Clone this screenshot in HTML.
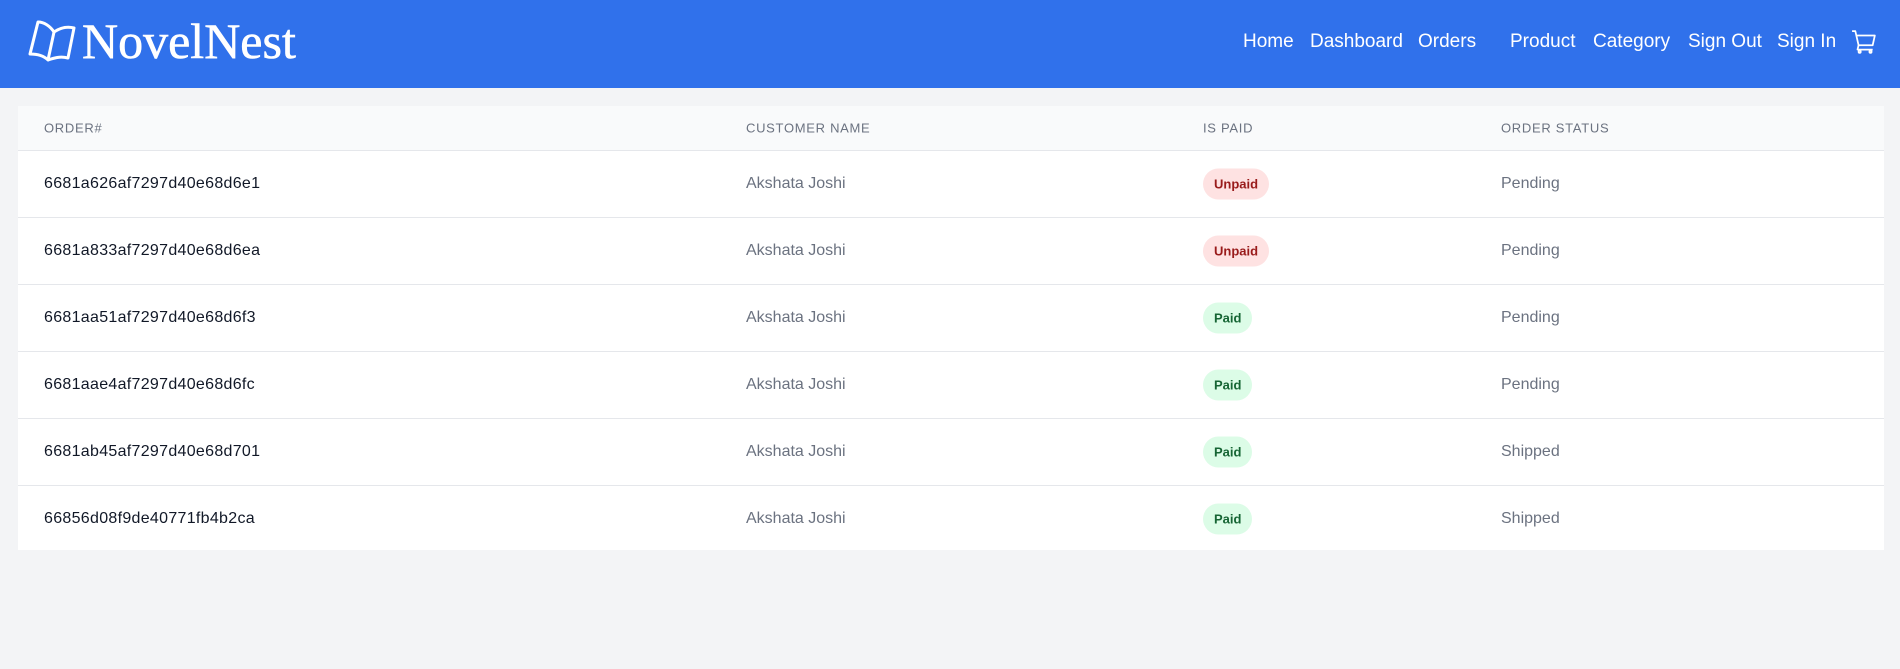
<!DOCTYPE html>
<html><head><meta charset="utf-8"><style>
body{margin:0;width:1900px;height:669px;background:#f3f4f6;font-family:"Liberation Sans",sans-serif;overflow:hidden}
.nav{height:88px;background:#3071eb;position:relative;color:#fff}
.logo{position:absolute;left:28px;top:12px;display:flex;align-items:center}
.logo span{font-family:"Liberation Serif",serif;font-size:50px;margin-left:2px;-webkit-text-stroke:.6px #fff}
.links{position:absolute;top:31px;font-size:19px}
.links a{position:absolute;white-space:nowrap;color:#fff;text-decoration:none}
.card{position:absolute;left:18px;top:106px;width:1866px;height:444px;background:#fff}
.th{height:44px;background:#f9fafb;border-bottom:1px solid #e5e7eb;position:relative;font-size:13px;letter-spacing:.7px;color:#6b7280}
.th div,.row div{position:absolute;top:50%;transform:translateY(-50%);white-space:nowrap}
.row{height:66px;border-bottom:1px solid #e5e7eb;position:relative;font-size:16px;color:#6b7280}
.row:last-child{border-bottom:none}
.id{color:#111827;letter-spacing:.3px}
.b{font-size:13px;font-weight:bold;border-radius:16px;height:31px;line-height:31px;padding:0 11px}
.u{background:#fee2e2;color:#991b1b}.p{background:#dcfce7;color:#166534}
</style></head><body>
<div class="nav">
<div class="logo"><svg width="52" height="46" viewBox="0 0 52 46" fill="none" stroke="#fff" stroke-width="3" stroke-linejoin="round"><path d="M10 4 C16 4 22 8 26 14 L20 42 C16 38 10 36 2 36 Z"/><path d="M26 14 C32 10 38 8 46 10 L40 40 C32 38 26 40 20 42"/></svg><span>NovelNest</span></div>
<div class="links">
<a style="left:1243px">Home</a><a style="left:1310px">Dashboard</a><a style="left:1418px">Orders</a><a style="left:1510px">Product</a><a style="left:1593px">Category</a><a style="left:1688px">Sign Out</a><a style="left:1777px">Sign In</a>
<svg style="position:absolute;left:1851px;top:-2px" width="26" height="26" viewBox="0 0 24 24" fill="none" stroke="#fff" stroke-width="1.6" stroke-linejoin="round"><path d="M1 2h3l3 13h13l2-9H5.5"/><path d="M7 15l-1 4h14"/><circle cx="8" cy="21" r="1"/><circle cx="18" cy="21" r="1"/></svg>
</div></div>
<div class="card">
<div class="th"><div style="left:26px">ORDER#</div><div style="left:728px">CUSTOMER NAME</div><div style="left:1185px">IS PAID</div><div style="left:1483px">ORDER STATUS</div></div>
<div class="row"><div class="id" style="left:26px">6681a626af7297d40e68d6e1</div><div style="left:728px">Akshata Joshi</div><div class="b u" style="left:1185px">Unpaid</div><div style="left:1483px">Pending</div></div>
<div class="row"><div class="id" style="left:26px">6681a833af7297d40e68d6ea</div><div style="left:728px">Akshata Joshi</div><div class="b u" style="left:1185px">Unpaid</div><div style="left:1483px">Pending</div></div>
<div class="row"><div class="id" style="left:26px">6681aa51af7297d40e68d6f3</div><div style="left:728px">Akshata Joshi</div><div class="b p" style="left:1185px">Paid</div><div style="left:1483px">Pending</div></div>
<div class="row"><div class="id" style="left:26px">6681aae4af7297d40e68d6fc</div><div style="left:728px">Akshata Joshi</div><div class="b p" style="left:1185px">Paid</div><div style="left:1483px">Pending</div></div>
<div class="row"><div class="id" style="left:26px">6681ab45af7297d40e68d701</div><div style="left:728px">Akshata Joshi</div><div class="b p" style="left:1185px">Paid</div><div style="left:1483px">Shipped</div></div>
<div class="row"><div class="id" style="left:26px">66856d08f9de40771fb4b2ca</div><div style="left:728px">Akshata Joshi</div><div class="b p" style="left:1185px">Paid</div><div style="left:1483px">Shipped</div></div>
</div>
</body></html>
